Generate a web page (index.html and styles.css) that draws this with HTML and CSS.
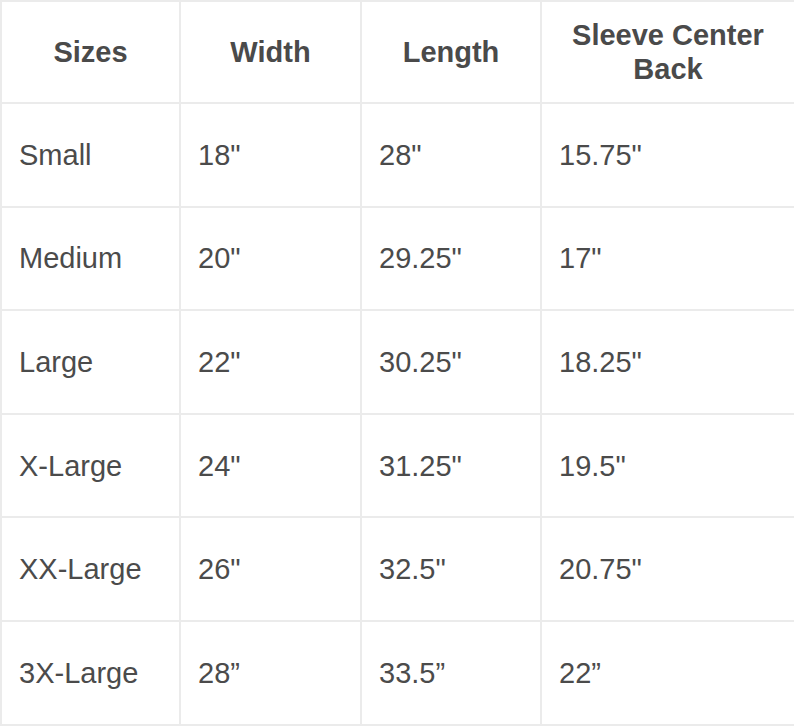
FILE: index.html
```html
<!DOCTYPE html>
<html>
<head>
<meta charset="utf-8">
<link rel="stylesheet" href="styles.css">
</head>
<body>
<table class="size-chart">
  <colgroup>
    <col class="c1"><col class="c2"><col class="c3"><col class="c4">
  </colgroup>
  <thead>
    <tr>
      <th>Sizes</th>
      <th>Width</th>
      <th>Length</th>
      <th>Sleeve Center<br>Back</th>
    </tr>
  </thead>
  <tbody>
    <tr><td>Small</td><td>18"</td><td>28"</td><td>15.75"</td></tr>
    <tr><td>Medium</td><td>20"</td><td>29.25"</td><td>17"</td></tr>
    <tr><td>Large</td><td>22"</td><td>30.25"</td><td>18.25"</td></tr>
    <tr><td>X-Large</td><td>24"</td><td>31.25"</td><td>19.5"</td></tr>
    <tr><td>XX-Large</td><td>26"</td><td>32.5"</td><td>20.75"</td></tr>
    <tr><td>3X-Large</td><td>28”</td><td>33.5”</td><td>22”</td></tr>
  </tbody>
</table>
</body>
</html>
```
FILE: styles.css
```css
html, body {
  margin: 0;
  padding: 0;
  background: #ffffff;
}
.size-chart {
  width: 794px;
  table-layout: fixed;
  border-collapse: collapse;
  font-family: "Liberation Sans", Arial, sans-serif;
  font-size: 29px;
  color: #4b4b4b;
}
.c1 { width: 179px; }
.c2 { width: 181px; }
.c3 { width: 180px; }
.c4 { width: 254px; }
.size-chart th,
.size-chart td {
  border: 2px solid #ebebeb;
  padding: 0 0 0 17px;
  vertical-align: middle;
  text-align: left;
  line-height: 34px;
}
.size-chart th {
  height: 100px;
  padding: 0;
  text-align: center;
  font-weight: bold;
  color: #4a4a4a;
}
.size-chart td {
  height: 101.6px;
}
```
